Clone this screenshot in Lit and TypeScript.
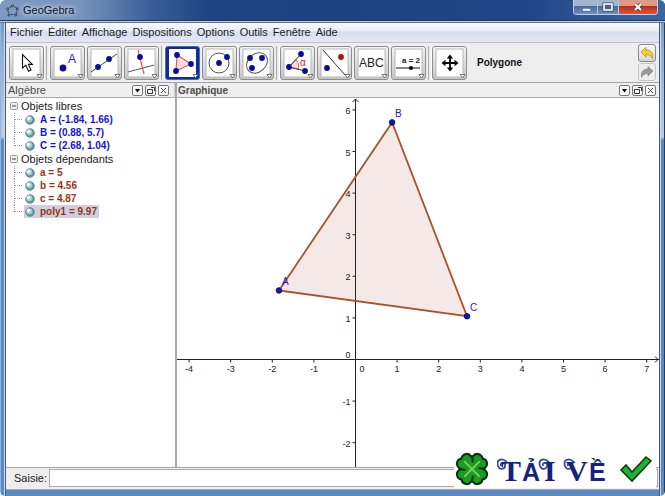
import { LitElement, html, svg, css } from "lit";
import { customElement } from "lit/decorators.js";

const dot = (x: number, y: number, fill = "#0c0c9c") => svg`<circle cx=${x} cy=${y} r="2.9" fill=${fill}/>`;

interface Tool { label: string; icon: unknown; active?: boolean; }

const groups: Tool[][] = [
  [{ label: "Déplacer", icon: svg`<path d="M13.5 8.5V22L16.8 19.2L19.6 25.2L22 24L19.4 18.4H23.4Z" fill="#fff" stroke="#111" stroke-width="1.1"/>` }],
  [
    { label: "Nouveau point", icon: svg`<circle cx="13" cy="22" r="3.4" fill="#0c0c9c"/><text x="18" y="17" font-size="12" fill="#1a1ae0">A</text>` },
    { label: "Droite", icon: svg`<path d="M4 26L30 8" stroke="#444"/>${dot(11, 21)}${dot(22, 13)}` },
    { label: "Perpendiculaire", icon: svg`<path d="M4 26L30 19" stroke="#555"/><path d="M14 4L20 28" stroke="#f05050" stroke-width="1.2"/>${dot(16, 11)}` },
  ],
  [
    { label: "Polygone", active: true, icon: svg`<path d="M12 9L26 18L11 25Z" fill="#fbdcdc" stroke="#ea5c5c" stroke-width="1.2"/>${dot(12, 9)}${dot(26, 18)}${dot(11, 25)}` },
    { label: "Cercle", icon: svg`<circle cx="17" cy="17" r="10" fill="none" stroke="#555"/>${dot(17, 17)}${dot(25, 11)}` },
    { label: "Ellipse", icon: svg`<ellipse cx="18" cy="17" rx="11.5" ry="9" transform="rotate(-42 18 17)" fill="none" stroke="#555"/>${dot(11, 12)}${dot(23, 12)}${dot(13, 22)}` },
  ],
  [
    { label: "Angle", icon: svg`<path d="M9 21L16 13.5A10 10 0 0 1 18.5 23Z" fill="#fbdcdc" stroke="#ea5c5c"/><path d="M21 8L9 21L25 25" fill="none" stroke="#333"/><text x="20" y="20" font-size="10" fill="#e02020">α</text>${dot(9, 21)}${dot(21, 8)}${dot(25, 25)}` },
    { label: "Symétrie axiale", icon: svg`<path d="M6 4L28 29" stroke="#333"/>${dot(10, 22)}${dot(24, 11, "#a81414")}` },
    { label: "Insérer texte", icon: svg`<text x="5" y="21" font-size="12" fill="#222">ABC</text>` },
    { label: "Curseur", icon: svg`<text x="11" y="17" font-size="8" font-weight="700" fill="#222">a = 2</text><path d="M5 22H29" stroke="#333" stroke-width="1.2"/><circle cx="20" cy="22" r="2" fill="#000"/>` },
  ],
  [{ label: "Déplacer la vue", icon: svg`<path d="M11 17H25M18 10V24" stroke="#000" stroke-width="1.8"/><path d="M9.500 17L13.500 13.800V20.200ZM26.500 17L22.500 13.800V20.200ZM18 8.500L14.800 12.500H21.200ZM18 25.500L14.800 21.500H21.200Z"/>` }],
];

const menus = ["Fichier", "Éditer", "Affichage", "Dispositions", "Options", "Outils", "Fenêtre", "Aide"];

const tree = [
  { name: "Objets libres", kind: "free", items: ["A = (-1.84, 1.66)", "B = (0.88, 5.7)", "C = (2.68, 1.04)"] },
  { name: "Objets dépendants", kind: "dep", items: ["a = 5", "b = 4.56", "c = 4.87", "poly1 = 9.97"] },
];

const points = [
  { name: "A", x: -1.84, y: 1.66 },
  { name: "B", x: 0.88, y: 5.7 },
  { name: "C", x: 2.68, y: 1.04 },
];

const UNIT = 41.6;
const OX = 178.5;
const OY = 261.5;
const px = (x: number) => OX + x * UNIT;
const py = (y: number) => OY - y * UNIT;

@customElement("app-root")
export class AppRoot extends LitElement {
  static styles = css`
    :host { display: block; font: 11px/13px "Liberation Sans", Arial, sans-serif; color: #1c1c1c; }
    * { box-sizing: border-box; }
    button { font: inherit; color: inherit; margin: 0; padding: 0; border: 0; background: none; display: block; }
    svg { display: block; }
    .window {
      position: relative; min-height: 100vh; display: flex; flex-direction: column; padding: 0 6px 6px;
      border-radius: 6px 6px 5px 5px; overflow: hidden;
      background:
        linear-gradient(90deg, #8fb3dc 0 1px, transparent 1px calc(100% - 1px), #243a60 calc(100% - 1px)),
        linear-gradient(90deg, transparent 4px, #c5dcf3 4px 5px, #44597c 5px 6px, transparent 6px calc(100% - 6px), #44597c calc(100% - 6px) calc(100% - 5px), #c5dcf3 calc(100% - 5px) calc(100% - 4px), transparent calc(100% - 4px)) 0 23px no-repeat,
        linear-gradient(180deg, #7d9ac0 22px, #8fadd2 50px, #b9cfe8 137px, #5a89c4 140px);
      background-color: #5a89c4;
    }
    .title {
      margin: 0 -6px; padding: 0 7px 0 6px; height: 23px; display: flex; align-items: flex-start; gap: 4px;
      background: linear-gradient(180deg, transparent 20px, #1d3868 20px 21px, #b9cfe8 21px 22px, #5a7092 22px), linear-gradient(90deg, #7d9ac0, #7894bc 80px, #3a5f98 150px, #1e4482 210px, #1d427f 330px, #204788 80%, #3d65a0);
    }
    .title h1 { font: inherit; color: #0b1322; margin: 0; flex: 1; padding-top: 4px; text-shadow: 0 0 5px #d3e2f3, 0 0 5px #d3e2f3; }
    .logo { margin-top: 4px; }
    .controls { display: flex; border: 1px solid #c3d0e0; border-top: 0; border-radius: 0 0 4px 4px; overflow: hidden; }
    .controls button { width: 24px; height: 14px; display: grid; place-items: center; background: linear-gradient(#9fb4cf 6px, #49689a 6px, #7290ba); border-right: 1px solid #b4c5dc; }
    .controls .mid { width: 21px; }
    .controls .close { width: 38px; border: 0; background: linear-gradient(#dc9a8b 6px, #b92c18 6px, #d65a3c); }
    .menubar { height: 19px; display: flex; align-items: center; gap: 5px; padding: 0 4px; background: linear-gradient(#fafbfe, #e8ecf7 8px, #d8def0 9px, #e3e7f6); }
    .toolbar { display: flex; align-items: center; gap: 6px; height: 41px; padding: 0 3px; background: #eeeeee; border-top: 1px solid #c2c2c6; border-bottom: 1px solid #a4a4a4; }
    .group { display: flex; gap: 2px; position: relative; }
    .group + .group::before { content: ""; position: absolute; left: -4px; top: 0; bottom: 0; width: 2px; border-left: 1px solid #aaa; border-right: 1px solid #fff; }
    .tool { width: 35px; height: 34px; border: 1px solid #8e8e8e; border-radius: 3px; background: linear-gradient(#f4f4f4, #c6c6c6); }
    .tool.active { border-color: #3d6db4; background: #14289e; }
    .mode { margin: 0 0 0 4px; font-weight: 700; font-size: 10px; flex: 1; color: #111; }
    .history { display: flex; flex-direction: column; gap: 1px; }
    .history button { width: 18px; height: 18px; border: 1px solid #888; border-radius: 3px; background: linear-gradient(#fafafa, #d4d4d4); }
    .history button:disabled { border-color: #c4c4c4; background: #eee; }
    .views { flex: 1; display: grid; grid-template-columns: minmax(0, 22fr) minmax(0, 63fr); background: #fff; }
    .view { display: flex; flex-direction: column; min-width: 0; }
    .view + .view { border-left: 2px solid #a8a8a8; }
    .head { display: flex; align-items: center; gap: 2px; height: 15px; padding: 0 3px 0 1px; background: #eeeeee; border-bottom: 1px solid #aaa; color: #4c4c4c; }
    .algebra .head { padding: 0 5px 0 2px; border-right: 1px solid #d0d0d0; }
    .head h2 { font: inherit; flex: 1; margin: 0; }
    .plot .head h2 { font-weight: 700; font-size: 10px; }
    .head button { width: 11px; height: 11px; border: 1px solid #777; border-radius: 2px; background: #fafafa; }
    .tree { list-style: none; margin: 0; padding: 1px 0 0 3px; }
    .tree ul { list-style: none; margin: 0; padding: 0 0 0 5px; }
    .branch { display: flex; align-items: center; gap: 3px; height: 14px; padding-left: 1px; }
    .leaf { display: flex; height: 13px; align-items: center; font-weight: 700; font-size: 10px; }
    .leaf span { display: flex; align-items: center; gap: 5px; height: 13px; padding: 0 2px 0 1px; }
    .free { color: #1414d8; }
    .dep { color: #963410; }
    .chosen span { background: #cfcfe2; }
    .canvas { flex: 1; min-height: 200px; display: grid; }
    .canvas > svg { width: 100%; height: 100%; overflow: hidden; }
    .axis { font-size: 9px; fill: #222; }
    .names { font-size: 10px; fill: #2020d8; }
    .entry { display: flex; align-items: stretch; gap: 2px; height: 23px; padding: 1px 1px 2px 8px; background: #eeeeee; border-top: 1px solid #a4a4a4; border-bottom: 1px solid #aaa; }
    .entry label { align-self: center; }
    .entry input { flex: 1; min-width: 0; font: inherit; border: 1px solid #aaa; background: #fff; padding: 0 3px; }
    .download { position: absolute; right: 9px; bottom: 8px; display: flex; align-items: center; gap: 8px; width: 202px; height: 39px; padding-left: 1px; background: #fff; text-decoration: none; }
    .fancy { font: 700 30px "Liberation Serif", serif; fill: #14247e; }
    .plain { font: 700 25px "Liberation Sans", sans-serif; fill: #14247e; }
  `;

  private headButtons() {
    return html`
      <button aria-label="Menu"><svg width="9" height="9"><path d="M2 3H7L4.500 6.500Z"/></svg></button>
      <button aria-label="Détacher"><svg width="9" height="9" fill="none" stroke="#333"><path d="M1.500 3.500H6.500V7.500H1.500ZM5 1.500H8.500V5"/></svg></button>
      <button aria-label="Fermer"><svg width="9" height="9" fill="none" stroke="#444"><path d="M2 2L7 7M7 2L2 7"/></svg></button>`;
  }

  private plot() {
    const xs = [-4, -3, -2, -1, 1, 2, 3, 4, 5, 6, 7];
    const ys = [-2, -1, 1, 2, 3, 4, 5, 6];
    return html`<svg role="img" aria-label="Graphique">
      <path d=${"M" + points.map((p) => `${px(p.x)} ${py(p.y)}`).join("L") + "Z"} fill="#f4e9e6"/>
      <g stroke="#222">
        <line x1="0" x2="100%" y1=${OY} y2=${OY}/>
        <line x1=${OX} x2=${OX} y1="1" y2="100%"/>
        <path d=${`M${OX - 3} 4L${OX} 1L${OX + 3} 4`} fill="none"/>
        ${xs.map((x) => svg`<line x1=${px(x)} x2=${px(x)} y1=${OY} y2=${OY + 3}/>`)}
        ${ys.map((y) => svg`<line x1=${OX - 3} x2=${OX} y1=${py(y)} y2=${py(y)}/>`)}
      </g>
      <svg x="100%" overflow="visible"><path d=${`M-4 ${OY - 3}L-1 ${OY}L-4 ${OY + 3}`} fill="none" stroke="#222"/></svg>
      <g class="axis">
        <text x=${OX + 4} y=${OY + 12}>0</text>
        <text x=${OX - 5} y=${OY - 2} text-anchor="end">0</text>
        ${xs.map((x) => svg`<text x=${px(x)} y=${OY + 12} text-anchor="middle">${x}</text>`)}
        ${ys.map((y) => svg`<text x=${OX - 5} y=${py(y) + 4} text-anchor="end">${y}</text>`)}
      </g>
      <path d=${"M" + points.map((p) => `${px(p.x)} ${py(p.y)}`).join("L") + "Z"} fill="none" stroke="#a8532a" stroke-width="1.8"/>
      <g class="names">
        ${points.map((p) => svg`<circle cx=${px(p.x)} cy=${py(p.y)} r="2.8" fill="#1414c8" stroke="#08083c" stroke-width="0.8"/><text x=${px(p.x) + 3} y=${py(p.y) - 5}>${p.name}</text>`)}
      </g>
    </svg>`;
  }

  render() {
    return html`<div class="window">
      <header class="title">
        <svg class="logo" width="13" height="13" fill="#b7c8dd" stroke="#26364e"><path d="M6.500 1.500L11.500 4.500L10 10.500H3L1.500 5Z" fill="none" stroke-dasharray="2 1"/><circle cx="6.500" cy="1.800" r="1"/><circle cx="11.300" cy="5" r="1"/><circle cx="9.800" cy="11" r="1"/><circle cx="3" cy="11" r="1"/><circle cx="1.600" cy="5" r="1"/></svg>
        <h1>GeoGebra</h1>
        <div class="controls">
          <button aria-label="Réduire"><svg width="12" height="10"><rect x="2.500" y="6.500" width="8" height="2.500" fill="#fff" stroke="#4b5f80" stroke-width=".5"/></svg></button>
          <button class="mid" aria-label="Agrandir"><svg width="12" height="10"><rect x="2" y="2" width="8" height="6" fill="none" stroke="#33435e" stroke-width="3"/><rect x="2" y="2" width="8" height="6" fill="#4b5f80" stroke="#fff" stroke-width="1.600"/></svg></button>
          <button class="close" aria-label="Fermer"><svg width="12" height="10"><path d="M3 2L9 8M9 2L3 8" stroke="#6b2c25" stroke-width="3.600"/><path d="M3 2L9 8M9 2L3 8" stroke="#fff" stroke-width="2.200"/></svg></button>
        </div>
      </header>
      <nav class="menubar">${menus.map((m) => html`<button>${m}</button>`)}</nav>
      <div class="toolbar">
        ${groups.map((g) => html`<div class="group">${g.map((t) => html`<button class="tool ${t.active ? "active" : ""}" aria-label=${t.label}>
          <svg width="33" height="32" viewBox="1 1 33 32"><rect x="4" y="3" width="27" height="28" fill="#fff" stroke="#b8b8b8" stroke-width=${t.active ? 0 : 1}/>${t.icon}<path d="M28 28.500H33L30.500 32Z" fill="#fff" stroke="#555" stroke-width=".8"/></svg>
        </button>`)}</div>`)}
        <p class="mode">Polygone</p>
        <div class="history">
          <button aria-label="Annuler"><svg width="16" height="16"><path d="M2 7L7 2.500V5C12 5 14.500 8 13.500 13.500C12 10.500 10 9.500 7 9.500V12Z" fill="#f5d21e" stroke="#a8881c" stroke-width=".7"/></svg></button>
          <button aria-label="Rétablir" disabled><svg width="16" height="16"><path d="M14 7L9 2.500V5C4 5 1.500 8 2.500 13.500C4 10.500 6 9.500 9 9.500V12Z" fill="#999" stroke="#858585" stroke-width=".7"/></svg></button>
        </div>
      </div>
      <main class="views">
        <section class="view algebra">
          <div class="head"><h2>Algèbre</h2>${this.headButtons()}</div>
          <ul class="tree">${tree.map((b) => html`<li>
            <div class="branch"><svg width="8" height="8"><rect x=".5" y=".5" width="7" height="7" rx="1" fill="#f0f0f0" stroke="#999"/><path d="M2 4H6" stroke="#444"/></svg>${b.name}</div>
            <ul>${b.items.map((t, i) => html`<li class="leaf ${b.kind} ${t.startsWith("poly") ? "chosen" : ""}">
              <svg width="10" height="13" stroke="#999" stroke-dasharray="1 1"><path d=${`M.5 0V${i === b.items.length - 1 ? 7 : 13}M1 6.5H9`}/></svg>
              <span><svg width="10" height="10"><circle cx="5" cy="5" r="4.300" fill="#5f9c9e"/><circle cx="5" cy="5" r="4.300" fill="none" stroke="#587c86" stroke-width=".8"/><circle cx="4.300" cy="4.300" r="3" fill="#a5cfcf"/><circle cx="3.600" cy="3.400" r="1.700" fill="#f4fcfb"/></svg>${t}</span>
            </li>`)}</ul>
          </li>`)}</ul>
        </section>
        <section class="view plot">
          <div class="head"><h2>Graphique</h2>${this.headButtons()}</div>
          <div class="canvas">${this.plot()}</div>
        </section>
      </main>
      <div class="entry"><label for="cmd">Saisie:</label><input id="cmd" type="text"></div>
      <a class="download" href="#">
        <svg width="34" height="34" viewBox="-20 -20 40 40">
          ${[45, 135, 225, 315].map((r) => svg`<path transform=${`rotate(${r})`} d="M0 -1C-4 -3 -10 -7 -10 -12C-10 -18 -4 -20.500 0 -17.500C4 -20.500 10 -18 10 -12C10 -7 4 -3 0 -1Z" fill="#1c9a24" stroke="#0a3010" stroke-width="2.400"/>`)}
          <circle r="8" fill="#1c9a24"/>
          <path d="M-9 -9L9 9M9 -9L-9 9" stroke="#6fd858" stroke-width="2.200"/>
        </svg>
        <svg width="114" height="38">
          <g fill="none" stroke="#3a489a" stroke-width="1.800"><path d="M10 12C4 7 -1 10 1 16C3 21 9 19 8 14C6 12 3 13 4 16"/><path d="M52 12C46 7 41 10 43 16C45 21 51 19 50 14C48 12 45 13 46 16"/><path d="M77 12C71 7 66 10 68 16C70 21 76 19 75 14C73 12 70 13 71 16"/></g>
          <text class="fancy" x="4" y="31">T</text><text class="plain" x="25" y="31">Ả</text><text class="fancy" x="47" y="31">I</text>
          <text class="fancy" x="69" y="31">V</text><text class="plain" x="92" y="31">Ề</text>
        </svg>
        <svg width="33" height="28"><path d="M2 15L7 10L13 17L27 2L32 6L13 26Z" fill="#22b030" stroke="#103c14" stroke-width="1.600"/></svg>
      </a>
    </div>`;
  }
}
